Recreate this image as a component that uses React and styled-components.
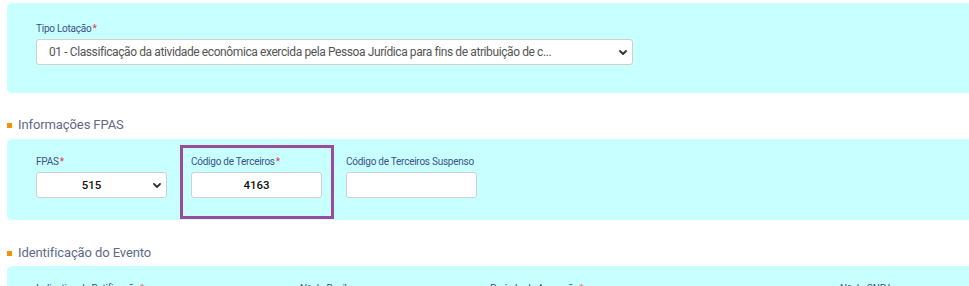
import React from 'react';
import styled, { createGlobalStyle } from 'styled-components';

const GlobalStyle = createGlobalStyle`
  html, body {
    margin: 0;
    padding: 0;
    background: #ffffff;
    overflow: hidden;
  }
  body {
    font-family: Roboto, "Liberation Sans", Arial, sans-serif;
  }
`;

const Page = styled.div`
  padding: 3px 0 0 7px;
  width: 969px;
  height: 286px;
  overflow: hidden;
  box-sizing: border-box;
`;

const Panel = styled.div`
  background: #c8ffff;
  border-radius: 5px 0 0 5px;
  box-sizing: border-box;
  padding: ${p => p.$pad};
  height: ${p => p.$height ? p.$height + 'px' : 'auto'};
`;

const SectionTitle = styled.div`
  display: flex;
  align-items: center;
  gap: 6px;
  margin: ${p => p.$margin};
  height: 18px;
  font-size: 13px;
  line-height: 18px;
  color: #5e6a86;
  letter-spacing: -0.1px;
`;

const Bullet = styled.span`
  width: 5px;
  height: 5px;
  background: #f5900f;
  margin-top: 1px;
`;

const Label = styled.label`
  display: block;
  font-size: 10px;
  line-height: 12px;
  height: 12px;
  color: #3d5189;
  margin-bottom: 4px;
  white-space: nowrap;
  letter-spacing: -0.25px;
`;

const Req = styled.span`
  color: #e03a3a;
  margin-left: 1px;
`;

const SelectWrap = styled.div`
  position: relative;
  width: ${p => p.$width}px;
  height: 26px;
`;

const Select = styled.select`
  appearance: none;
  -webkit-appearance: none;
  width: 100%;
  height: 100%;
  box-sizing: border-box;
  border: 1px solid #cfcfcf;
  border-radius: 3px;
  background: #ffffff;
  padding: ${p => p.$center ? '0 20px 0 0' : '0 24px 0 12px'};
  font-family: Roboto, "Liberation Sans", sans-serif;
  font-size: ${p => p.$center ? '11.5px' : '12px'};
  font-weight: ${p => p.$center ? 500 : 400};
  letter-spacing: ${p => p.$center ? '0' : '-0.4px'};
  color: ${p => p.$center ? '#111' : '#555'};
  text-align-last: ${p => p.$center ? 'center' : 'left'};
  outline: none;
`;

const Chevron = styled.svg`
  position: absolute;
  right: ${p => p.$right}px;
  top: 11px;
  pointer-events: none;
`;

const Input = styled.input`
  width: 131px;
  height: 26px;
  box-sizing: border-box;
  border: 1px solid #cfcfcf;
  border-radius: 3px;
  background: #ffffff;
  font-family: Roboto, "Liberation Sans", sans-serif;
  font-size: 11.5px;
  font-weight: 500;
  color: #111;
  text-align: center;
  outline: none;
`;

const Row = styled.div`
  display: flex;
  gap: 1px;
`;

const Field = styled.div`
  border: 3px solid ${p => p.$active ? '#9b4b9e' : 'transparent'};
  padding: 8px 9px 18px 8px;
`;

const EventRow = styled.div`
  display: flex;
`;

const EventCol = styled.div`
  width: ${p => p.$width}px;
  flex: none;
`;

const ChevronIcon = ({ right }) => (
  <Chevron $right={right} width="8" height="5" viewBox="0 0 8 5">
    <path d="M1 1 L4 4 L7 1" fill="none" stroke="#333" strokeWidth="1.8" strokeLinecap="round" strokeLinejoin="round" />
  </Chevron>
);

export default function App() {
  return (
    <Page>
      <GlobalStyle />
      <Panel $pad="20px 0 0 29px" $height={90}>
        <Label>Tipo Lotação<Req>*</Req></Label>
        <SelectWrap $width={597}>
          <Select defaultValue="01">
            <option value="01">01 - Classificação da atividade econômica exercida pela Pessoa Jurídica para fins de atribuição de c...</option>
          </Select>
          <ChevronIcon right={6} />
        </SelectWrap>
      </Panel>

      <SectionTitle $margin="23px 0 5px 0">
        <Bullet />
        Informações FPAS
      </SectionTitle>

      <Panel $pad="6px 0 1px 18px">
        <Row>
          <Field>
            <Label>FPAS<Req>*</Req></Label>
            <SelectWrap $width={131}>
              <Select $center defaultValue="515">
                <option value="515">515</option>
              </Select>
              <ChevronIcon right={6} />
            </SelectWrap>
          </Field>
          <Field $active>
            <Label>Código de Terceiros<Req>*</Req></Label>
            <Input defaultValue="4163" />
          </Field>
          <Field>
            <Label>Código de Terceiros Suspenso</Label>
            <Input defaultValue="" />
          </Field>
        </Row>
      </Panel>

      <SectionTitle $margin="24px 0 4px 0">
        <Bullet />
        Identificação do Evento
      </SectionTitle>

      <Panel $pad="17px 0 0 29px" $height={40}>
        <EventRow>
          <EventCol $width={264}><Label>Indicativo de Retificação<Req>*</Req></Label></EventCol>
          <EventCol $width={190}><Label>Nº do Recibo</Label></EventCol>
          <EventCol $width={350}><Label>Período de Apuração<Req>*</Req></Label></EventCol>
          <EventCol $width={100}><Label>Nº do CNPJ</Label></EventCol>
        </EventRow>
      </Panel>
    </Page>
  );
}
